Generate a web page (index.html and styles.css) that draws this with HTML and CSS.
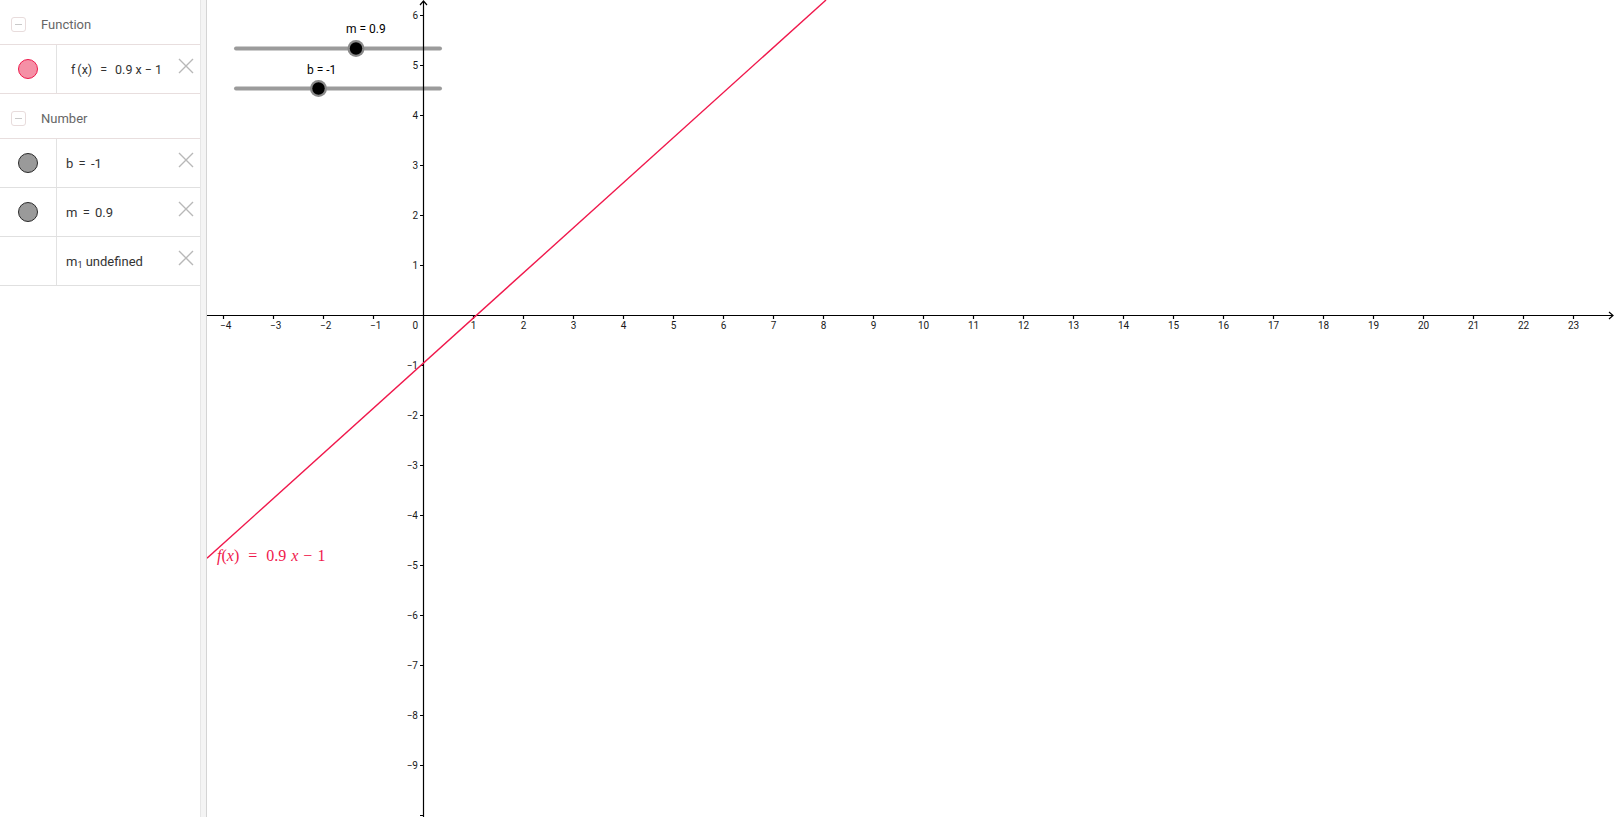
FILE: index.html
```html
<!DOCTYPE html>
<html lang="en">
<head>
<meta charset="utf-8">
<title>GeoGebra</title>
<link rel="stylesheet" href="styles.css">
</head>
<body>
<div class="app">
  <aside class="algebra">
    <div class="group-head"><span class="collapse"></span><span class="group-title">Function</span></div>
    <div class="item item-fn">
      <div class="marble-cell"><span class="marble pink"></span></div>
      <div class="item-body fn-body">f<span class="sp1"></span>(x)<span class="sp2"></span>=<span class="sp2"></span>0.9 x − 1</div>
      <svg class="del" viewBox="0 0 16 16"><path d="M1 1L15 15M15 1L1 15"/></svg>
    </div>
    <div class="group-head"><span class="collapse"></span><span class="group-title">Number</span></div>
    <div class="item">
      <div class="marble-cell"><span class="marble gray"></span></div>
      <div class="item-body">b <span class="eq">=</span> -1</div>
      <svg class="del" viewBox="0 0 16 16"><path d="M1 1L15 15M15 1L1 15"/></svg>
    </div>
    <div class="item">
      <div class="marble-cell"><span class="marble gray"></span></div>
      <div class="item-body">m <span class="eq">=</span> 0.9</div>
      <svg class="del" viewBox="0 0 16 16"><path d="M1 1L15 15M15 1L1 15"/></svg>
    </div>
    <div class="item">
      <div class="marble-cell"></div>
      <div class="item-body">m<sub>1</sub> undefined</div>
      <svg class="del" viewBox="0 0 16 16"><path d="M1 1L15 15M15 1L1 15"/></svg>
    </div>
  </aside>
  <div class="splitter"></div>
  <main class="graphics">
    <svg class="canvas" width="1409" height="817" viewBox="207 0 1409 817">
      <!-- sliders -->
      <line class="slider-track" x1="236" y1="48.5" x2="440" y2="48.5"/>
      <circle class="slider-halo" cx="356" cy="48.5" r="8.5"/>
      <circle class="slider-dot" cx="356" cy="48.5" r="6.2"/>
      <text class="slider-label" x="346" y="33">m = 0.9</text>
      <line class="slider-track" x1="236" y1="88.5" x2="440" y2="88.5"/>
      <circle class="slider-halo" cx="318.5" cy="88.5" r="8.5"/>
      <circle class="slider-dot" cx="318.5" cy="88.5" r="6.2"/>
      <text class="slider-label" x="307" y="74">b = -1</text>

      <!-- axes -->
      <path class="axis" d="M207 315.5H1613M1609 312L1613 315.5L1609 319M423.5 817V1M420 5L423.5 1L427 5"/>
      <path class="axis" d="M223.5 315.5v3.5M273.5 315.5v3.5M323.5 315.5v3.5M373.5 315.5v3.5M473.5 315.5v3.5M523.5 315.5v3.5M573.5 315.5v3.5M623.5 315.5v3.5M673.5 315.5v3.5M723.5 315.5v3.5M773.5 315.5v3.5M823.5 315.5v3.5M873.5 315.5v3.5M923.5 315.5v3.5M973.5 315.5v3.5M1023.5 315.5v3.5M1073.5 315.5v3.5M1123.5 315.5v3.5M1173.5 315.5v3.5M1223.5 315.5v3.5M1273.5 315.5v3.5M1323.5 315.5v3.5M1373.5 315.5v3.5M1423.5 315.5v3.5M1473.5 315.5v3.5M1523.5 315.5v3.5M1573.5 315.5v3.5"/>
      <path class="axis" d="M420 15.5h3.5M420 65.5h3.5M420 115.5h3.5M420 165.5h3.5M420 215.5h3.5M420 265.5h3.5M420 365.5h3.5M420 415.5h3.5M420 465.5h3.5M420 515.5h3.5M420 565.5h3.5M420 615.5h3.5M420 665.5h3.5M420 715.5h3.5M420 765.5h3.5M420 815.5h3.5"/>

      <g class="xlabels">
        <text class="neg" x="220" y="329">−4</text>
        <text class="neg" x="270" y="329">−3</text>
        <text class="neg" x="320" y="329">−2</text>
        <text class="neg" x="370" y="329">−1</text>
        <text class="zero" x="418" y="329">0</text>
        <text x="473.5" y="329">1</text>
        <text x="523.5" y="329">2</text>
        <text x="573.5" y="329">3</text>
        <text x="623.5" y="329">4</text>
        <text x="673.5" y="329">5</text>
        <text x="723.5" y="329">6</text>
        <text x="773.5" y="329">7</text>
        <text x="823.5" y="329">8</text>
        <text x="873.5" y="329">9</text>
        <text x="923.5" y="329">10</text>
        <text x="973.5" y="329">11</text>
        <text x="1023.5" y="329">12</text>
        <text x="1073.5" y="329">13</text>
        <text x="1123.5" y="329">14</text>
        <text x="1173.5" y="329">15</text>
        <text x="1223.5" y="329">16</text>
        <text x="1273.5" y="329">17</text>
        <text x="1323.5" y="329">18</text>
        <text x="1373.5" y="329">19</text>
        <text x="1423.5" y="329">20</text>
        <text x="1473.5" y="329">21</text>
        <text x="1523.5" y="329">22</text>
        <text x="1573.5" y="329">23</text>
      </g>
      <g class="ylabels">
        <text x="418" y="19">6</text>
        <text x="418" y="69">5</text>
        <text x="418" y="119">4</text>
        <text x="418" y="169">3</text>
        <text x="418" y="219">2</text>
        <text x="418" y="269">1</text>
        <text x="418" y="369">−1</text>
        <text x="418" y="419">−2</text>
        <text x="418" y="469">−3</text>
        <text x="418" y="519">−4</text>
        <text x="418" y="569">−5</text>
        <text x="418" y="619">−6</text>
        <text x="418" y="669">−7</text>
        <text x="418" y="719">−8</text>
        <text x="418" y="769">−9</text>
      </g>

      <!-- function -->
      <line class="fn-line" x1="207" y1="558.3" x2="826" y2="0"/>
      <text class="fn-label" x="217" y="561"><tspan class="it">f</tspan>(<tspan class="it">x</tspan>)<tspan dx="9">=</tspan><tspan dx="9">0.9</tspan><tspan class="it" dx="5">x</tspan><tspan dx="5">−</tspan><tspan dx="5">1</tspan></text>
    </svg>
  </main>
</div>
</body>
</html>
```
FILE: styles.css
```css
html, body {
  margin: 0;
  padding: 0;
  background: #fff;
}
body {
  font-family: Roboto, "Noto Sans", "Liberation Sans", sans-serif;
}
.app {
  display: flex;
  width: 1616px;
  height: 817px;
}
.algebra {
  width: 200px;
  flex: none;
  background: #fff;
}
.group-head {
  height: 45px;
  box-sizing: border-box;
  border-bottom: 1px solid #e8dede;
  display: flex;
  align-items: center;
  padding: 5px 0 0 11px;
}
.collapse {
  width: 15px;
  height: 15px;
  box-sizing: border-box;
  border: 1px solid #e8dcdc;
  border-radius: 3px;
  display: flex;
  align-items: center;
  justify-content: center;
}
.collapse::after {
  content: "";
  width: 7px;
  height: 1px;
  background: #c9c9c9;
}
.group-title {
  margin-left: 15px;
  font-size: 13px;
  color: #666;
}
.item {
  height: 49px;
  box-sizing: border-box;
  border-bottom: 1px solid #e0e0e0;
  display: flex;
  align-items: center;
}
.item-fn {
  border-bottom-color: #e8dede;
}
.marble-cell {
  width: 57px;
  height: 100%;
  flex: none;
  box-sizing: border-box;
  border-right: 1px solid #e2e2e2;
  display: flex;
  align-items: center;
  justify-content: center;
}
.marble {
  width: 20px;
  height: 20px;
  border-radius: 50%;
  box-sizing: border-box;
}
.marble.pink {
  background: #f590a6;
  border: 1.5px solid #ee1a4c;
}
.marble.gray {
  background: #9a9a9a;
  border: 1px solid #2a2a2a;
}
.item-body {
  flex: 1;
  padding-left: 9px;
  font-size: 13px;
  color: #333;
  white-space: nowrap;
}
.fn-body {
  padding-left: 14px;
  font-size: 12.5px;
}
.sp1 {
  display: inline-block;
  width: 2px;
}
.sp2 {
  display: inline-block;
  width: 8px;
}
.eq {
  margin: 0 2px;
}
.item-body sub {
  font-size: 9px;
  vertical-align: -2px;
  line-height: 0;
}
.del {
  width: 16px;
  height: 16px;
  flex: none;
  margin: 0 6px 6px 0;
  fill: none;
  stroke: #b8b8b8;
  stroke-width: 1.4;
}
.splitter {
  width: 7px;
  flex: none;
  box-sizing: border-box;
  background: #f4f4f4;
  border-left: 1px solid #e6e6e6;
  border-right: 1px solid #d4d4d4;
}
.graphics {
  flex: 1;
  overflow: hidden;
  background: #fff;
}
.canvas {
  display: block;
}
.slider-track {
  stroke: #9b9b9b;
  stroke-width: 4;
  stroke-linecap: round;
}
.slider-halo {
  fill: #8a8a8a;
}
.slider-dot {
  fill: #000;
}
.slider-label {
  font-family: Roboto, "Liberation Sans", sans-serif;
  font-size: 12px;
  fill: #000;
}
.axis {
  fill: none;
  stroke: #000;
  stroke-width: 1.2;
}
.xlabels text,
.ylabels text {
  font-family: Roboto, "Liberation Sans", sans-serif;
  font-size: 10px;
  fill: #1a1a1a;
}
.xlabels text {
  text-anchor: middle;
}
.xlabels text.neg {
  text-anchor: start;
}
.xlabels text.zero {
  text-anchor: end;
}
.ylabels text {
  text-anchor: end;
}
.fn-line {
  stroke: #f0184c;
  stroke-width: 1.4;
}
.fn-label {
  font-family: "Liberation Serif", "DejaVu Serif", serif;
  font-size: 16px;
  fill: #f0184c;
}
.fn-label .it {
  font-style: italic;
}
```
